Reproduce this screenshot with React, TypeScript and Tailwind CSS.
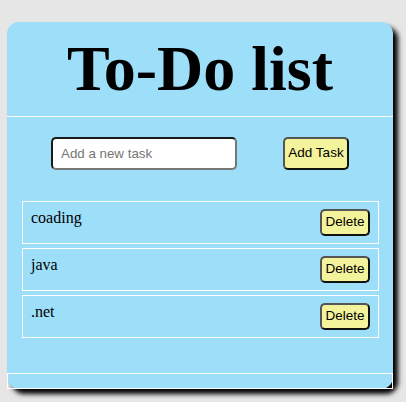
import React from "react";

const tasks = ["coading", "java", ".net"];

export default function App() {
  return (
    <div className="min-h-screen bg-[#e6e6e6] pt-[22px] pl-[7px] font-['Liberation_Serif',serif]">
      <div className="w-[386px] h-[367px] bg-[#9ddef9] rounded-[12px] shadow-[5px_5px_5px_#000] flex flex-col">
        <div className="border-b border-white pt-[10px] pb-[10px] text-center">
          <h1 className="text-[64px] font-bold leading-[74px] text-black font-['Liberation_Serif',serif]">
            To-Do list
          </h1>
        </div>
        <div className="flex justify-center gap-[46px] mt-[20px]">
          <input
            type="text"
            placeholder="Add a new task"
            className="w-[186px] h-[33px] bg-white rounded-[5px] border-2 border-t-[#1a1a1a] border-l-[#1a1a1a] border-b-[#767676] border-r-[#767676] px-[8px] text-[13.33px] font-['Liberation_Sans',Arial,sans-serif] placeholder:text-[#757575] outline-none"
          />
          <button className="w-[66px] h-[33px] bg-[#f3f39b] rounded-[5px] border-2 border-t-[#555] border-l-[#555] border-b-[#111] border-r-[#111] text-[13.5px] text-black font-['Liberation_Sans',Arial,sans-serif] px-0">
            Add Task
          </button>
        </div>
        <ul className="mt-[31px] ml-[15px] w-[357px] flex flex-col gap-[4px]">
          {tasks.map((t) => (
            <li
              key={t}
              className="flex justify-between border border-white px-[8px] py-[7px]"
            >
              <span className="text-[16px] leading-[18px] text-black">{t}</span>
              <button className="w-[50px] h-[27px] bg-[#f3f39b] rounded-[5px] border-2 border-t-[#555] border-l-[#555] border-b-[#111] border-r-[#111] text-[13.5px] text-black font-['Liberation_Sans',Arial,sans-serif] px-0">
                Delete
              </button>
            </li>
          ))}
        </ul>
        <div className="mt-auto h-[16px] border border-white"></div>
      </div>
    </div>
  );
}
